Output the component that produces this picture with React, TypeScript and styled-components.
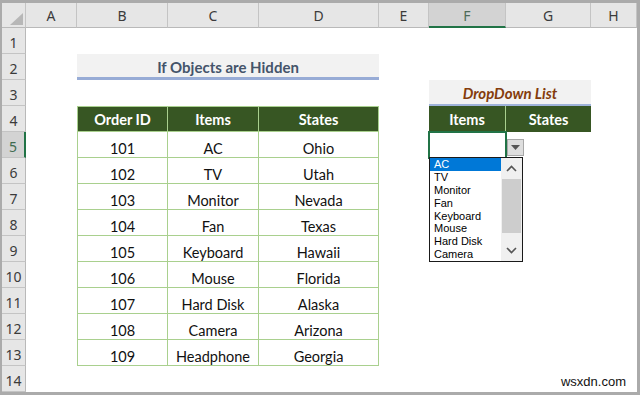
import React from "react";
import styled, { createGlobalStyle, css } from "styled-components";

const GlobalStyle = createGlobalStyle`
  html, body { margin: 0; padding: 0; background: #ffffff; }
  body { width: 640px; height: 395px; overflow: hidden; }
  * { box-sizing: border-box; }
`;

const cellFont = `Lato, "Open Sans", "Liberation Sans", sans-serif`;
const uiFont = `"Noto Sans", "Open Sans", "Liberation Sans", sans-serif`;
const tableBorder = "#a9d08e";
const headerBg = "#e6e6e6";
const headerLine = "#c4c4c4";
const selGreen = "#217346";

const Frame = styled.div`
  position: relative;
  width: 640px;
  height: 395px;
  background: #ffffff;
  border-style: solid;
  border-color: #ababab;
  border-width: 3px 3px 3px 2px;
`;

const Sheet = styled.div`
  display: grid;
  grid-template-columns: 24px 51px 91px 91px 120px 50px 77px 85px 46px;
  grid-template-rows: 25px repeat(14, 26px);
  background: #ffffff;
`;

const Corner = styled.div`
  position: relative;
  background: ${headerBg};
  border-right: 1px solid ${headerLine};
  border-bottom: 1px solid #b9b9b9;
  display: flex;
  align-items: flex-end;
  justify-content: flex-end;
  padding: 0 2px 2px 0;
`;

const ColHeader = styled.div<{ $sel?: boolean }>`
  background: ${(p) => (p.$sel ? "#d3d3d3" : headerBg)};
  border-right: 1px solid ${headerLine};
  border-bottom: ${(p) => (p.$sel ? `2px solid ${selGreen}` : "1px solid #b9b9b9")};
  display: flex;
  align-items: center;
  justify-content: center;
  font-family: ${uiFont};
  font-size: 14px;
  color: ${(p) => (p.$sel ? "#4d6b58" : "#3b3b3b")};
  padding-top: 1px;
`;

const RowHeader = styled.div<{ $sel?: boolean }>`
  background: ${(p) => (p.$sel ? "#d3d3d3" : headerBg)};
  border-right: ${(p) => (p.$sel ? `2px solid ${selGreen}` : `1px solid #b9b9b9`)};
  border-bottom: 1px solid ${headerLine};
  display: flex;
  align-items: flex-end;
  justify-content: center;
  padding-bottom: 1px;
  font-family: ${uiFont};
  font-size: 14px;
  color: ${(p) => (p.$sel ? "#3f6b50" : "#3b3b3b")};
`;

const Blank = styled.div`
  background: #ffffff;
`;

const Title = styled.div`
  grid-column: span 3;
  background: #f2f2f2;
  border-bottom: 3px solid #98acd6;
  display: flex;
  align-items: center;
  justify-content: center;
  padding-top: 2px;
  font-family: ${cellFont};
  font-weight: 700;
  font-size: 15px;
  color: #44546a;
`;

const DropTitle = styled.div`
  grid-column: span 2;
  background: #f2f2f2;
  border-bottom: 2px solid #9fb3da;
  display: flex;
  align-items: center;
  justify-content: center;
  padding-top: 2px;
  font-family: ${cellFont};
  font-weight: 700;
  font-style: italic;
  font-size: 15px;
  color: #843c0c;
`;

const edge = css<{ $first?: boolean }>`
  border-right: 1px solid ${tableBorder};
  border-bottom: 1px solid ${tableBorder};
  border-left: ${(p) => (p.$first ? `1px solid ${tableBorder}` : "none")};
`;

const HeadCell = styled.div<{ $first?: boolean }>`
  ${edge};
  border-top: 1px solid ${tableBorder};
  background: #375623;
  display: flex;
  align-items: center;
  justify-content: center;
  padding-top: 1px;
  font-family: ${cellFont};
  font-weight: 700;
  font-size: 14.5px;
  color: #ffffff;
`;

const DropHead = styled(HeadCell)`
  border-top: none;
  border-bottom: none;
  border-left: none;
  border-right: ${(p) => (p.$first ? `1px solid ${tableBorder}` : "none")};
`;

const DataCell = styled.div<{ $first?: boolean }>`
  ${edge};
  background: #ffffff;
  display: flex;
  align-items: flex-end;
  justify-content: center;
  padding-bottom: 0;
  font-family: ${cellFont};
  font-size: 14.5px;
  color: #111111;
`;

const ActiveCell = styled.div`
  position: relative;
  background: #ffffff;
  outline: 2px solid ${selGreen};
  outline-offset: -1px;
`;

const DropButton = styled.div`
  position: absolute;
  left: calc(100% + 1px);
  top: 7px;
  width: 17px;
  height: 17px;
  background: #dedede;
  border: 1px solid #a8a8a8;
  display: flex;
  align-items: center;
  justify-content: center;
  z-index: 3;
`;

const ListBox = styled.div`
  position: absolute;
  left: 0;
  top: calc(100% - 1px);
  width: 94px;
  height: 105px;
  background: #ffffff;
  border: 1px solid #1a1a1a;
  display: flex;
  z-index: 3;
`;

const ListItems = styled.div`
  flex: 1;
  display: flex;
  flex-direction: column;
`;

const ListItem = styled.div<{ $sel?: boolean }>`
  height: 13px;
  line-height: 13px;
  padding-left: 4px;
  font-family: "Liberation Sans", Arial, sans-serif;
  font-size: 11px;
  white-space: nowrap;
  overflow: hidden;
  background: ${(p) => (p.$sel ? "#0078d7" : "transparent")};
  color: ${(p) => (p.$sel ? "#ffffff" : "#000000")};
`;

const ScrollBar = styled.div`
  width: 21px;
  background: #f0f0f0;
  display: flex;
  flex-direction: column;
`;

const ScrollArrow = styled.div`
  height: 21px;
  display: flex;
  align-items: center;
  justify-content: center;
`;

const ScrollTrack = styled.div`
  flex: 1;
  display: flex;
  flex-direction: column;
`;

const ScrollThumb = styled.div`
  height: 54px;
  margin: 0 1px;
  background: #cdcdcd;
`;

const Watermark = styled.div`
  position: absolute;
  right: 9px;
  bottom: 3px;
  padding: 0 2px;
  background: rgba(255, 255, 255, 0.85);
  font-family: "Liberation Sans", Arial, sans-serif;
  font-size: 13px;
  color: #111111;
`;

const columns = ["A", "B", "C", "D", "E", "F", "G", "H"];

const data: [string, string, string][] = [
  ["101", "AC", "Ohio"],
  ["102", "TV", "Utah"],
  ["103", "Monitor", "Nevada"],
  ["104", "Fan", "Texas"],
  ["105", "Keyboard", "Hawaii"],
  ["106", "Mouse", "Florida"],
  ["107", "Hard Disk", "Alaska"],
  ["108", "Camera", "Arizona"],
  ["109", "Headphone", "Georgia"],
];

const listItems = ["AC", "TV", "Monitor", "Fan", "Keyboard", "Mouse", "Hard Disk", "Camera"];

const Chevron = ({ up }: { up?: boolean }) => (
  <svg width="11" height="7" viewBox="0 0 11 7">
    <polyline
      points={up ? "1,6 5.5,1.5 10,6" : "1,1 5.5,5.5 10,1"}
      fill="none"
      stroke="#555"
      strokeWidth="1.6"
    />
  </svg>
);

function renderRow(r: number) {
  const cells: React.ReactNode[] = [];
  cells.push(
    <RowHeader key={`h${r}`} $sel={r === 5}>
      {r}
    </RowHeader>
  );
  cells.push(<Blank key={`a${r}`} />);
  if (r === 2) {
    cells.push(<Title key={`t${r}`}>If Objects are Hidden</Title>);
  } else if (r === 4) {
    ["Order ID", "Items", "States"].forEach((t, i) =>
      cells.push(
        <HeadCell key={`hd${i}`} $first={i === 0}>
          {t}
        </HeadCell>
      )
    );
  } else if (r >= 5 && r <= 13) {
    data[r - 5].forEach((t, i) =>
      cells.push(
        <DataCell key={`d${r}-${i}`} $first={i === 0}>
          {t}
        </DataCell>
      )
    );
  } else {
    [0, 1, 2].forEach((i) => cells.push(<Blank key={`b${r}-${i}`} />));
  }
  cells.push(<Blank key={`e${r}`} />);
  if (r === 3) {
    cells.push(<DropTitle key={`dt${r}`}>DropDown List</DropTitle>);
  } else if (r === 4) {
    cells.push(
      <DropHead key="fh" $first>
        Items
      </DropHead>
    );
    cells.push(<DropHead key="gh">States</DropHead>);
  } else if (r === 5) {
    cells.push(
      <ActiveCell key="f5">
        <DropButton>
          <svg width="9" height="5" viewBox="0 0 9 5">
            <polygon points="0,0 9,0 4.5,5" fill="#555" />
          </svg>
        </DropButton>
        <ListBox>
          <ListItems>
            {listItems.map((t, i) => (
              <ListItem key={t} $sel={i === 0}>
                {t}
              </ListItem>
            ))}
          </ListItems>
          <ScrollBar>
            <ScrollArrow>
              <Chevron up />
            </ScrollArrow>
            <ScrollTrack>
              <ScrollThumb />
            </ScrollTrack>
            <ScrollArrow>
              <Chevron />
            </ScrollArrow>
          </ScrollBar>
        </ListBox>
      </ActiveCell>
    );
    cells.push(<Blank key="g5" />);
  } else {
    cells.push(<Blank key={`f${r}`} />);
    cells.push(<Blank key={`g${r}`} />);
  }
  cells.push(<Blank key={`hh${r}`} />);
  return cells;
}

export default function App() {
  return (
    <>
      <GlobalStyle />
      <Frame>
        <Sheet>
          <Corner>
            <svg width="13" height="12" viewBox="0 0 13 12">
              <polygon points="13,0 13,12 0,12" fill="#b7b7b7" />
            </svg>
          </Corner>
          {columns.map((c) => (
            <ColHeader key={c} $sel={c === "F"}>
              {c}
            </ColHeader>
          ))}
          {Array.from({ length: 14 }, (_, i) => renderRow(i + 1))}
        </Sheet>
        <Watermark>wsxdn.com</Watermark>
      </Frame>
    </>
  );
}
